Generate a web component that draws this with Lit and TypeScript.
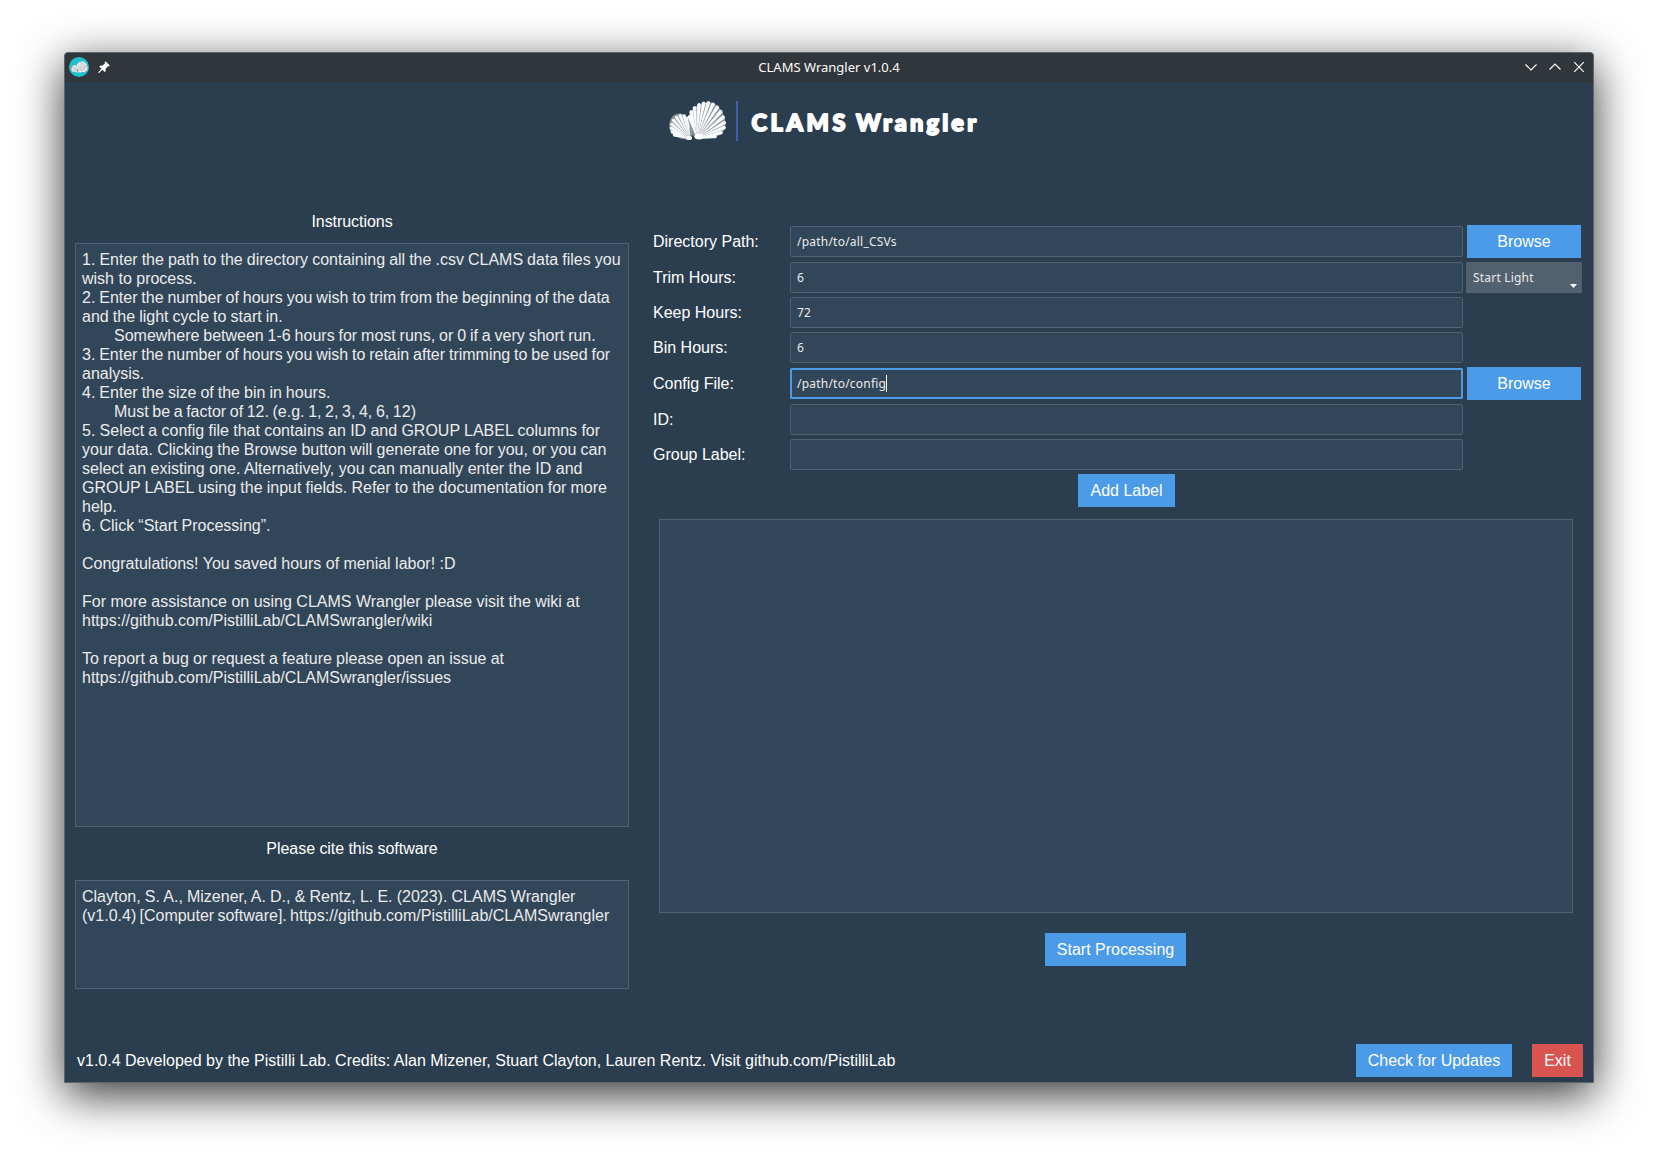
import { LitElement, html, svg, css, nothing } from "lit";
import { customElement, property } from "lit/decorators.js";
import { styleMap } from "lit/directives/style-map.js";

interface Field {
  label: string;
  value: string;
  action?: "browse" | "cycle";
  focused?: boolean;
}

const FIELDS: Field[] = [
  { label: "Directory Path:", value: "/path/to/all_CSVs", action: "browse" },
  { label: "Trim Hours:", value: "6", action: "cycle" },
  { label: "Keep Hours:", value: "72" },
  { label: "Bin Hours:", value: "6" },
  { label: "Config File:", value: "/path/to/config", action: "browse", focused: true },
  { label: "ID:", value: "" },
  { label: "Group Label:", value: "" },
];

/** A line of panel text and the adjustment of its word gaps, in pixels. */
type Line = [text: string, gap?: number];

const INSTRUCTIONS: Line[] = [
  ["1. Enter the path to the directory containing all the .csv CLAMS data files you", -0.41],
  ["wish to process."],
  ["2. Enter the number of hours you wish to trim from the beginning of the data", -0.57],
  ["and the light cycle to start in.", -0.35],
  ["\tSomewhere between 1-6 hours for most runs, or 0 if a very short run.", -0.57],
  ["3. Enter the number of hours you wish to retain after trimming to be used for", -0.6],
  ["analysis."],
  ["4. Enter the size of the bin in hours.", -0.42],
  ["\tMust be a factor of 12. (e.g. 1, 2, 3, 4, 6, 12)", -0.85],
  ["5. Select a config file that contains an ID and GROUP LABEL columns for", -0.17],
  ["your data. Clicking the Browse button will generate one for you, or you can", -0.23],
  ["select an existing one. Alternatively, you can manually enter the ID and"],
  ["GROUP LABEL using the input fields. Refer to the documentation for more", -0.3],
  ["help."],
  ["6. Click “Start Processing”.", -0.3],
  [""],
  ["Congratulations! You saved hours of menial labor! :D"],
  [""],
  ["For more assistance on using CLAMS Wrangler please visit the wiki at"],
  ["https://github.com/PistilliLab/CLAMSwrangler/wiki"],
  [""],
  ["To report a bug or request a feature please open an issue at", -0.26],
  ["https://github.com/PistilliLab/CLAMSwrangler/issues"],
];

const CITATION: Line[] = [
  ["Clayton, S. A., Mizener, A. D., & Rentz, L. E. (2023). CLAMS Wrangler", -0.28],
  ["(v1.0.4) [Computer software]. https://github.com/PistilliLab/CLAMSwrangler", -1.2],
];

/** Ribs fanning out from a hinge; each rib is a round-ended wedge. */
function ribs(cx: number, cy: number, tips: [number, number][], w: number) {
  return tips.map(([x, y]) => {
    const dx = x - cx;
    const dy = y - cy;
    const len = Math.hypot(dx, dy);
    const nx = (-dy / len) * w;
    const ny = (dx / len) * w;
    return svg`<path d="M${cx} ${cy}L${x + nx} ${y + ny}Q${x + (dx / len) * w * 1.5} ${y + (dy / len) * w * 1.5} ${x - nx} ${y - ny}Z"/>`;
  });
}

@customElement("clam-shells")
export class ClamShells extends LitElement {
  static styles = css`
    :host { display: block; }
    svg { display: block; width: 100%; height: 100%; }
    .base { fill: #8a949c; }
    .rib { fill: #fbfcfd; }
    .hinge { fill: #fff; }
  `;
  render() {
    return html`<svg viewBox="0 0 58 40">
      <path class="base" d="M1 29C-1 24 1 16 6 13.500C11 11.500 17 13 19 17L25 31C23 36 21 38.500 18 38.500C10 38 3 35 1 29Z"/>
      <g class="rib">${ribs(21, 38, [
        [5, 34], [2.800, 30.8], [1.9, 27], [2.5, 23], [4.300, 19], [7.300, 16], [11, 14.300], [15, 14.500], [18.500, 17],
      ], 1.6)}</g>
      <path class="base" d="M19 19C20 10 28 2 39 1C49 1 57 13 56.500 25C55 33 48 38 33 38L25 36Z"/>
      <g class="rib">${ribs(28, 37.5, [
        [20.3, 15.500], [22, 10.500], [25.500, 6.500], [30, 3.500], [34.700, 1.800], [39.500, 1.500], [44.200, 3], [48.500, 6],
        [52, 10.500], [54.500, 16], [55.700, 21.500], [55.500, 26.500], [52.500, 31.500], [46.500, 35.500],
      ], 1.85)}</g>
      <ellipse class="hinge" cx="30" cy="35.500" rx="4.500" ry="3"/>
      <ellipse class="hinge" cx="20" cy="37" rx="3" ry="2"/>
    </svg>`;
  }
}

@customElement("title-bar")
export class TitleBar extends LitElement {
  static styles = css`
    :host {
      display: grid;
      grid-template-columns: 1fr auto 1fr;
      align-items: center;
      box-sizing: border-box;
      height: 29px;
      padding-bottom: 1px;
      background: #31363b;
      color: #fcfcfc;
      font: 13px/18px "Noto Sans", sans-serif;
    }
    .left { display: flex; align-items: center; padding-left: 4px; gap: 7px; }
    .right { display: flex; justify-content: flex-end; align-items: center; padding-right: 6px; gap: 8px; }
    .app { display: flex; align-items: center; justify-content: center; width: 20px; height: 20px; border-radius: 50%; background: #1fc1cf; }
    .app clam-shells { width: 17px; height: 12px; }
    .icon { display: block; width: 16px; height: 16px; fill: none; stroke: #fcfcfc; stroke-width: 1.2; }
    .pin { fill: #fcfcfc; stroke: none; }
  `;
  render() {
    return html`
      <div class="left">
        <span class="app"><clam-shells></clam-shells></span>
        <svg class="icon pin" viewBox="0 0 16 16">
          <path d="M9.500 2.200L13.800 6.500L12.800 7.600L12 7.300L9.500 10L9.700 12L8.700 13L6.300 10.700L3 14L2.300 14L2.300 13.200L5.400 9.800L3.200 7.500L4.200 6.500L6.200 6.700L9 4.200L8.600 3.200Z"/>
        </svg>
      </div>
      <span>CLAMS Wrangler v1.0.4</span>
      <div class="right">
        <svg class="icon" viewBox="0 0 16 16"><path d="M2.500 5.500L8 11L13.500 5.500"/></svg>
        <svg class="icon" viewBox="0 0 16 16"><path d="M2.500 10.500L8 5L13.500 10.500"/></svg>
        <svg class="icon" viewBox="0 0 16 16"><path d="M3.200 3.200L12.800 12.800M12.800 3.200L3.200 12.800"/></svg>
      </div>
    `;
  }
}

@customElement("brand-logo")
export class BrandLogo extends LitElement {
  static styles = css`
    :host { display: flex; align-items: flex-start; height: 44px; }
    clam-shells { width: 58px; height: 40px; }
    .rule { width: 2px; height: 40px; margin-left: 9px; background: #3e61ac; }
    .name { display: block; width: 236px; height: 44px; margin-left: 11px; overflow: visible; }
    .word {
      font: 900 23.5px "Lato", sans-serif;
      fill: #fff;
      stroke: #fff;
      stroke-width: 1.8;
      stroke-linejoin: round;
    }
  `;
  render() {
    return html`
      <clam-shells></clam-shells>
      <span class="rule"></span>
      <svg class="name" viewBox="0 0 236 44">
        <text class="word" x="2.500" y="29.500" textLength="94" lengthAdjust="spacing">CLAMS</text>
        <text class="word" x="107" y="29.500" textLength="120" lengthAdjust="spacing">Wrangler</text>
      </svg>
    `;
  }
}

@customElement("text-entry")
export class TextEntry extends LitElement {
  @property() value = "";
  @property({ type: Boolean, reflect: true }) focused = false;
  static styles = css`
    :host {
      display: flex;
      align-items: center;
      box-sizing: border-box;
      height: 31px;
      padding-left: 6px;
      border: 1px solid #526170;
      border-radius: 1.5px;
      background: #32465a;
      color: #ebebeb;
      font: 12px/17px "Noto Sans", sans-serif;
      letter-spacing: 0.22px;
      white-space: pre;
    }
    :host([focused]) { border: 2px solid #4c9be8; padding-left: 5px; }
    .caret { width: 1px; height: 17px; background: #fff; }
  `;
  render() {
    return html`<span>${this.value}</span>${this.focused ? html`<span class="caret"></span>` : nothing}`;
  }
}

@customElement("app-root")
export class AppRoot extends LitElement {
  static styles = css`
    :host {
      display: block;
      box-sizing: border-box;
      width: 1658px;
      height: 1159px;
      padding: 52px 64px 76px;
      overflow: hidden;
      background: #fff;
      font: 16px/19px "Liberation Sans", Arial, sans-serif;
      color: #fff;
    }
    .window {
      display: flex;
      flex-direction: column;
      box-sizing: border-box;
      height: 1031px;
      border: 1px solid #5d666f;
      border-radius: 4px 4px 0 0;
      background: #2b3e50;
      box-shadow: 0 12px 46px rgba(0, 0, 0, 0.8);
    }
    title-bar { border-radius: 3px 3px 0 0; }
    .header { display: flex; padding: 19px 0 0 604px; height: 116px; box-sizing: border-box; }
    .body { display: flex; height: 817px; }
    .side { display: flex; flex-direction: column; width: 554px; padding: 14px 0 0 10px; }
    .caption { text-align: center; letter-spacing: -0.05px; }
    .panel {
      box-sizing: border-box;
      padding: 6px;
      border: 1px solid #526170;
      background: #32465a;
      color: #ebebeb;
    }
    .line { height: 19px; white-space: pre; tab-size: 32px; }
    .instructions { height: 584px; margin: 12px 0; }
    .citation { height: 109px; margin-top: 22px; }
    .main { display: flex; flex-direction: column; width: 929px; margin-left: 24px; padding-top: 27px; }
    .form {
      display: grid;
      grid-template-columns: 134px 673px 116px;
      grid-template-rows: 33px 31px 31px 31px 33px 31px 31px 33px;
      gap: 4px 3px;
      align-items: center;
    }
    .label { grid-column: 1; }
    .btn {
      display: flex;
      align-items: center;
      justify-content: center;
      height: 33px;
      background: #4c9be8;
      color: #fff;
      white-space: pre;
    }
    .browse { width: 114px; justify-self: center; }
    .add { grid-column: 2; width: 97px; justify-self: center; }
    .cycle {
      display: flex;
      justify-content: space-between;
      box-sizing: border-box;
      height: 31px;
      padding: 7px 5px 0 7px;
      background: #526170;
      color: #ebebeb;
      font: 12px/17px "Noto Sans", sans-serif;
      letter-spacing: 0.2px;
    }
    .arrow { width: 7px; height: 4px; margin-top: 15px; background: #fff; clip-path: polygon(0 0, 100% 0, 50% 100%); }
    .table { height: 394px; margin: 12px 9px 20px 6px; box-sizing: border-box; border: 1px solid #526170; background: #32465a; }
    .start { width: 141px; margin-left: 392px; }
    .footer { display: flex; align-items: center; padding: 0 10px 0 12px; height: 33px; margin-top: 29px; }
    .credits { flex: 1; letter-spacing: 0.004px; }
    .check { width: 156px; margin-right: 20px; }
    .exit { width: 51px; background: #d9534f; }
  `;

  private action(f: Field) {
    if (f.action === "browse") return html`<span class="btn browse">Browse</span>`;
    if (f.action === "cycle") return html`<span class="cycle">Start Light<i class="arrow"></i></span>`;
    return html`<span></span>`;
  }

  private lines(lines: Line[]) {
    return lines.map(([text, gap = 0]) => html`<div class="line" style=${styleMap({ wordSpacing: `${gap}px` })}>${text}</div>`);
  }

  render() {
    return html`
      <div class="window">
        <title-bar></title-bar>
        <div class="header"><brand-logo></brand-logo></div>
        <div class="body">
          <div class="side">
            <div class="caption">Instructions</div>
            <div class="panel instructions">${this.lines(INSTRUCTIONS)}</div>
            <div class="caption">Please cite this software</div>
            <div class="panel citation">${this.lines(CITATION)}</div>
          </div>
          <div class="main">
            <div class="form">
              ${FIELDS.map(
                (f) => html`
                  <span class="label">${f.label}</span>
                  <text-entry .value=${f.value} ?focused=${!!f.focused}></text-entry>
                  ${this.action(f)}
                `,
              )}
              <span class="btn add">Add Label</span>
            </div>
            <div class="table"></div>
            <span class="btn start">Start Processing</span>
          </div>
        </div>
        <div class="footer">
          <span class="credits">v1.0.4 Developed by the Pistilli Lab. Credits: Alan Mizener, Stuart Clayton, Lauren Rentz. Visit github.com/PistilliLab</span>
          <span class="btn check">Check for Updates</span>
          <span class="btn exit">Exit</span>
        </div>
      </div>
    `;
  }
}
